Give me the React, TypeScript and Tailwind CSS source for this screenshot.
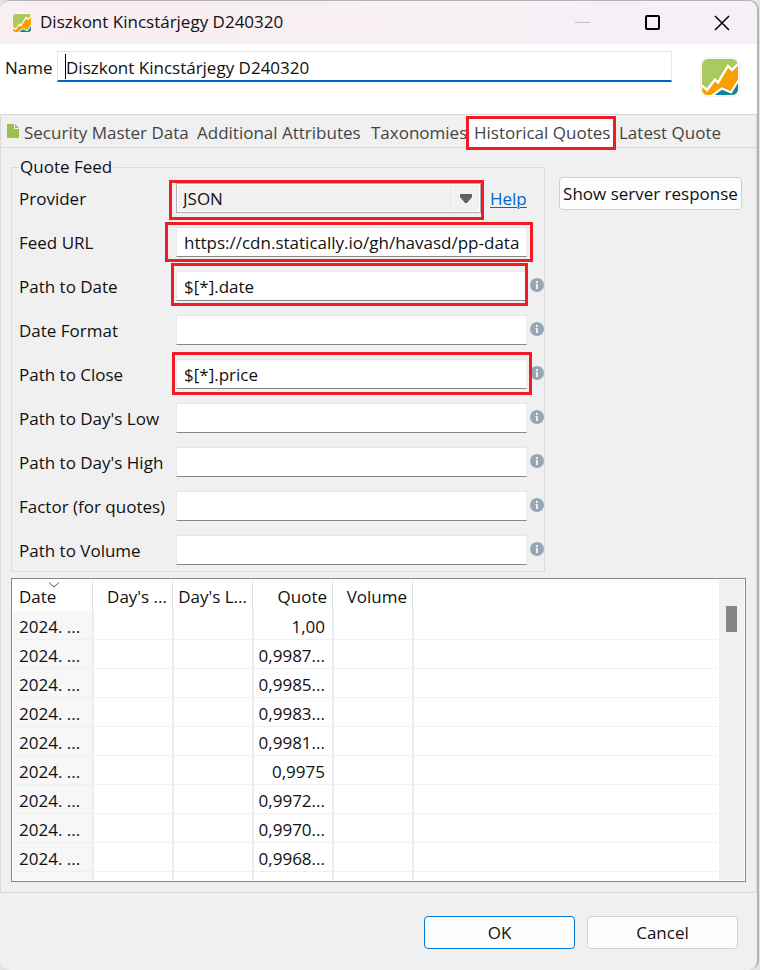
import React from "react";

interface Field {
  id: string;
  label: string;
  value: string;
  info: boolean;
  mark?: string;
}

const fields: Field[] = [
  { id: "feed-url", label: "Feed URL", value: "https://cdn.statically.io/gh/havasd/pp-data", info: false, mark: "-left-[11px] -right-[6px] -top-[5px] -bottom-[5px]" },
  { id: "path-date", label: "Path to Date", value: "$[*].date", info: true, mark: "-left-[5px] -right-[1px] -top-[8px] -bottom-[5px]" },
  { id: "date-format", label: "Date Format", value: "", info: true },
  { id: "path-close", label: "Path to Close", value: "$[*].price", info: true, mark: "-left-[4px] -right-[5px] -top-[7px] -bottom-[6px]" },
  { id: "path-low", label: "Path to Day's Low", value: "", info: true },
  { id: "path-high", label: "Path to Day's High", value: "", info: true },
  { id: "factor", label: "Factor (for quotes)", value: "", info: true },
  { id: "path-volume", label: "Path to Volume", value: "", info: true },
];

const quotes = ["1,00", "0,9987...", "0,9985...", "0,9983...", "0,9981...", "0,9975", "0,9972...", "0,9970...", "0,9968..."];

function Highlight({ place }: { place: string }) {
  return <span aria-hidden="true" className={`pointer-events-none absolute border-[3px] border-[#ee1c24] ${place}`} />;
}

function Logo({ className }: { className: string }) {
  return (
    <svg viewBox="0 0 40 40" className={className} aria-hidden="true">
      <rect x="0.5" y="0.5" width="39" height="39" rx="8" fill="#fff" stroke="#f0f0f0" />
      <clipPath id="logo-clip">
        <rect x="2" y="2" width="36" height="36" rx="6" />
      </clipPath>
      <g clipPath="url(#logo-clip)">
        <rect x="2" y="2" width="36" height="36" fill="#a9cb5e" />
        <path d="M0 27 L7 33 L15 22.5 L18 25.5 L28 9 L32 13 L40 5 V40 H0Z" fill="#f8a000" />
        <path d="M12 40 L22 31.5 L31 35.5 L40 21 V40Z" fill="#0b85a0" />
        <path d="M0 27 L7 33 L15 22.5 L18 25.5 L28 9 L32 13 L40 5" fill="none" stroke="#fff" strokeWidth="2.4" />
        <path d="M10 40 L22 31.5 L31 35.5 L40 21" fill="none" stroke="#fff" strokeWidth="2" />
      </g>
    </svg>
  );
}

function InfoIcon() {
  return (
    <svg viewBox="0 0 14 14" className="mb-[3px] h-[14px] w-[14px]" aria-hidden="true">
      <circle cx="7" cy="7" r="7" fill="#97a6b5" />
      <rect x="6" y="3" width="2" height="2" fill="#f0f0f0" />
      <path d="M5.5 6 H8 V11 H6 V7 H5.5Z" fill="#f0f0f0" />
    </svg>
  );
}

export default function App() {
  return (
    <div className="min-h-screen bg-[#e3e3e3] pr-[1px] font-['Open_Sans','Noto_Sans',sans-serif] text-[17px] leading-6 text-[#111]">
      <main className="flex min-h-screen flex-col overflow-hidden rounded-[10px] border-t border-r-2 border-[#b4b4b4] bg-[#f0f0f0]">
        <header className="flex h-[43px] items-center bg-linear-to-r from-[#f9eef0] to-[#f5f0f7] pl-3">
          <Logo className="h-5 w-5" />
          <h1 className="ml-2 flex-1 pb-[2px]">Diszkont Kincstárjegy D240320</h1>
          <button aria-label="Minimize" className="flex h-full w-[70px] items-center justify-center">
            <span className="h-px w-[15px] bg-[#c4c0c4]" />
          </button>
          <button aria-label="Maximize" className="flex h-full w-[70px] items-center justify-center">
            <span className="h-[15px] w-[15px] rounded-[2px] border-2 border-black" />
          </button>
          <button aria-label="Close" className="flex h-full w-[70px] items-center justify-center">
            <svg viewBox="0 0 16 16" className="h-4 w-4" aria-hidden="true">
              <path d="M1 1 L15 15 M15 1 L1 15" stroke="#000" strokeWidth="1.5" />
            </svg>
          </button>
        </header>

        <div className="flex h-[70px] items-start bg-white pt-[7px] pl-[5px]">
          <label htmlFor="name" className="w-[52px] pt-[5px]">Name</label>
          <div className="relative flex-1">
            <input id="name" defaultValue="Diszkont Kincstárjegy D240320" className="h-[31px] w-full border border-b-2 border-[#e6e6e6] border-b-[#0067c0] bg-white pt-[2px] pl-[8px] outline-none" />
            <span aria-hidden="true" className="absolute top-[3px] left-[8px] h-[25px] w-px bg-black" />
          </div>
          <Logo className="mt-[6px] mr-[17px] ml-[28px] h-10 w-10" />
        </div>

        <section className="border border-[#d9d9d9]">
          <nav className="flex h-[33px] items-center border-b border-[#d9d9d9] pl-[6px] text-[#444]" role="tablist">
            <svg viewBox="0 0 12 14" className="mb-[1px] h-[14px] w-3" aria-hidden="true">
              <path d="M0 0 H7 V5 H12 V14 H0Z" fill="#9ac14b" />
              <path d="M8 0 L12 4 H8Z" fill="#9ac14b" />
            </svg>
            <button role="tab" aria-selected="false" className="ml-[5px] w-[173px] pt-1 text-left whitespace-nowrap">Security Master Data</button>
            <button role="tab" aria-selected="false" className="w-[174px] pt-1 text-left whitespace-nowrap">Additional Attributes</button>
            <button role="tab" aria-selected="false" className="w-[98px] pt-1 text-left whitespace-nowrap">Taxonomies</button>
            <button role="tab" aria-selected="true" className="relative h-full w-[147px] bg-white pt-1 pl-[5px] text-left whitespace-nowrap">
              Historical Quotes
              <Highlight place="-left-[3px] right-0 top-[1px] -bottom-[3px]" />
            </button>
            <button role="tab" aria-selected="false" className="pt-1 pl-[3px] text-left whitespace-nowrap">Latest Quote</button>
          </nav>

          <div className="pt-[8px] pr-[10px] pb-[10px] pl-[10px]">
            <div className="flex items-start gap-[14px]">
              <fieldset className="min-w-0 flex-1 border border-[#dcdcdc] pr-0 pb-[6px] pl-[7px]">
                <legend className="h-[22px] px-px leading-[22px]">Quote Feed</legend>
                <div className="flex flex-col gap-[14px] pt-[5px]">
                  <div className="flex h-[30px] items-center">
                    <label htmlFor="provider" className="w-[157px] pt-[2px]">Provider</label>
                    <div className="relative mr-[9px] h-[30px] flex-1">
                      <select id="provider" defaultValue="JSON" className="h-full w-full appearance-none border border-[#adadb3] bg-[#f0f0f0] pt-px pl-[6px] shadow-[inset_0_0_0_1px_#fff] outline-none">
                        <option>JSON</option>
                      </select>
                      <span aria-hidden="true" className="pointer-events-none absolute top-[2px] right-[27px] h-[26px] w-px bg-[#fafafa]" />
                      <svg viewBox="0 0 14 10" className="pointer-events-none absolute top-[11px] right-[8px] h-[10px] w-[14px]" aria-hidden="true">
                        <path d="M1 0 H13 V3 L8 9 H6 L1 3Z" fill="#616161" />
                      </svg>
                      <Highlight place="-left-[7px] -right-[3px] -top-[3px] -bottom-[7px]" />
                    </div>
                    <a href="#help" className="w-[54px] pt-[2px] text-[#0066cc] underline decoration-1 underline-offset-2">Help</a>
                  </div>
                  {fields.map((f) => (
                    <div key={f.id} className="flex h-[30px] items-center">
                      <label htmlFor={f.id} className="w-[157px] pt-[2px] whitespace-nowrap">{f.label}</label>
                      <div className="relative h-[30px] flex-1">
                        <input id={f.id} defaultValue={f.value} className="block h-full w-full border border-[#e8e8e8] border-b-[#868686] bg-white pl-[7px] outline-none" />
                        {f.mark && <Highlight place={f.mark} />}
                      </div>
                      <span className="w-[17px] pl-[3px]">{f.info && <InfoIcon />}</span>
                    </div>
                  ))}
                </div>
              </fieldset>
              <button className="mt-[21px] mr-[4px] h-[33px] w-[183px] rounded-[4px] border border-[#d0d0d0] bg-[#fdfdfd] pt-px whitespace-nowrap">Show server response</button>
            </div>

            <div className="mt-[6px] flex h-[304px] border border-[#828790] bg-white p-px">
              <div className="flex-1 overflow-hidden">
                <table className="w-full table-fixed border-separate border-spacing-0">
                  <thead>
                    <tr className="h-[31px] text-right">
                      <th className="relative w-[80px] border-r border-[#e2e2e2] pt-[2px] pl-[6px] text-left font-normal">
                        <svg viewBox="0 0 12 6" className="absolute top-[2px] left-[35px] h-[6px] w-3" aria-hidden="true">
                          <path d="M1 0.5 L6 5 L11 0.5" fill="none" stroke="#555" />
                        </svg>
                        Date
                      </th>
                      <th className="w-[80px] border-r border-[#e2e2e2] pt-[2px] pr-[5px] font-normal whitespace-nowrap">Day's ...</th>
                      <th className="w-[80px] border-r border-[#e2e2e2] pt-[2px] pr-[5px] font-normal whitespace-nowrap">Day's L...</th>
                      <th className="w-[80px] border-r border-[#e2e2e2] pt-[2px] pr-[5px] font-normal">Quote</th>
                      <th className="w-[80px] border-r border-[#e2e2e2] pt-[2px] pr-[5px] font-normal">Volume</th>
                      <th aria-label="Spare" />
                    </tr>
                  </thead>
                  <tbody>
                    {[...quotes, ""].map((q, i) => (
                      <tr key={i} className="h-[29px]">
                        <td className="border-r border-b border-[#e6edf8] border-b-[#f0f0f0] bg-[#f7f7f7] pt-[3px] pl-[6px] whitespace-nowrap">{q && "2024. ..."}</td>
                        <td className="border-x border-b border-[#e6edf8] border-b-[#f0f0f0]" />
                        <td className="border-x border-b border-[#e6edf8] border-b-[#f0f0f0]" />
                        <td className="border-x border-b border-[#e6edf8] border-b-[#f0f0f0] pt-[3px] pr-[7px] text-right">{q}</td>
                        <td className="border-x border-b border-[#e6edf8] border-b-[#f0f0f0]" />
                        <td className="border-b border-l border-[#e6edf8] border-b-[#f0f0f0]" />
                      </tr>
                    ))}
                  </tbody>
                </table>
              </div>
              <div className="ml-px w-[25px] bg-[#f0f0f0] pt-[26px] pl-[7px]">
                <div className="h-[26px] w-[11px] bg-[#868686]" />
              </div>
            </div>
          </div>
        </section>

        <footer className="flex justify-end gap-3 pt-[23px] pr-[19px] pb-[21px]">
          <button className="h-[33px] w-[151px] rounded-[4px] border border-[#0078d4] bg-[#fdfdfd] pt-px">OK</button>
          <button className="h-[33px] w-[151px] rounded-[4px] border border-[#d0d0d0] bg-[#fdfdfd] pt-px">Cancel</button>
        </footer>
      </main>
    </div>
  );
}
